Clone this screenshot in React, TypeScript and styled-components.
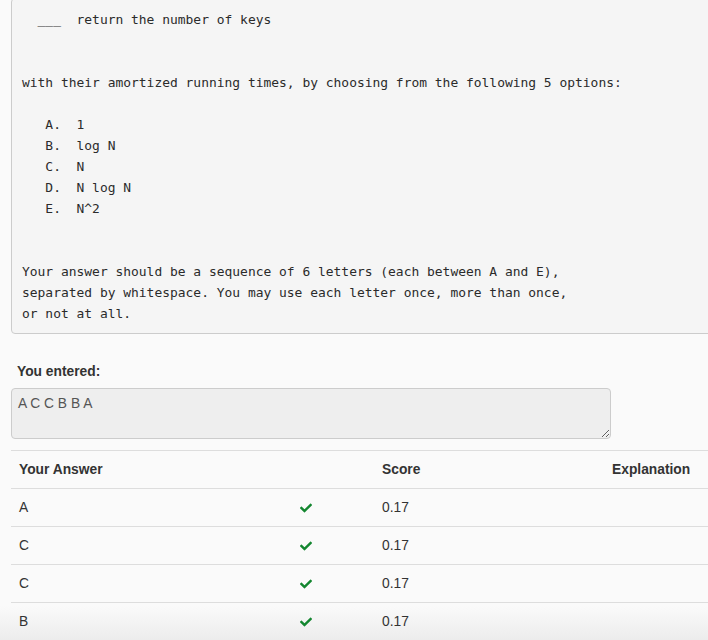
import React from 'react';
import styled, { createGlobalStyle } from 'styled-components';
import { FaCheck } from 'react-icons/fa';

const GlobalStyle = createGlobalStyle`
  html, body {
    margin: 0;
    padding: 0;
    overflow: hidden;
  }
  body {
    min-height: 640px;
    background: linear-gradient(to bottom, #fafafa 0, #fafafa 606px, #ececec 640px);
    font-family: 'Liberation Sans', Arial, sans-serif;
    color: #333;
  }
`;

const Page = styled.div`
  padding-left: 11px;
  min-height: 640px;
`;

const Question = styled.pre`
  margin: -2px -40px 0 0;
  padding: 9.5px 10px;
  background: #f5f5f5;
  border: 1px solid #ccc;
  border-radius: 4px;
  font-family: 'DejaVu Sans Mono', 'Liberation Mono', monospace;
  font-size: 12.95px;
  line-height: 21px;
  color: #2b2b2b;
  white-space: pre;
`;

const Label = styled.div`
  margin: 28px 0 6px 6px;
  font-size: 13.8px;
  font-weight: 700;
  line-height: 20px;
  color: #333;
`;

const Entered = styled.textarea`
  display: block;
  box-sizing: border-box;
  width: 600px;
  height: 51px;
  margin: 0;
  padding: 5px 6px;
  background: #eee;
  border: 1px solid #ccc;
  border-radius: 4px;
  font-family: 'Liberation Sans', Arial, sans-serif;
  font-size: 13.8px;
  line-height: 20px;
  color: #555;
  resize: vertical;
  outline: none;
`;

const Table = styled.table`
  margin-top: 11px;
  width: 740px;
  border-collapse: collapse;
  table-layout: fixed;
  font-size: 13.8px;
  color: #333;
`;

const Cell = styled.td<{ $w?: number }>`
  ${p => (p.$w ? `width: ${p.$w}px;` : '')}
  box-sizing: border-box;
  padding: 9px 8px 8px;
  line-height: 20px;
  border-top: 1px solid #ddd;
  text-align: left;
  vertical-align: top;
`;

const Head = styled(Cell).attrs({ as: 'th' })`
  font-weight: 700;
`;

const Check = styled(FaCheck)`
  display: block;
  margin-top: 4px;
  width: 12px;
  height: 12px;
  color: #13862f;
`;

const questionText = `  ___  return the number of keys


with their amortized running times, by choosing from the following 5 options:

   A.  1
   B.  log N
   C.  N
   D.  N log N
   E.  N^2


Your answer should be a sequence of 6 letters (each between A and E),
separated by whitespace. You may use each letter once, more than once,
or not at all.`;

const rows = ['A', 'C', 'C', 'B'];

export default function App() {
  return (
    <>
      <GlobalStyle />
      <Page>
        <Question>{questionText}</Question>
        <Label>You entered:</Label>
        <Entered readOnly value="A C C B B A" />
        <Table>
          <thead>
            <tr>
              <Head $w={281}>Your Answer</Head>
              <Head $w={82}></Head>
              <Head $w={230}>Score</Head>
              <Head>Explanation</Head>
            </tr>
          </thead>
          <tbody>
            {rows.map((r, i) => (
              <tr key={i}>
                <Cell>{r}</Cell>
                <Cell>
                  <Check />
                </Cell>
                <Cell>0.17</Cell>
                <Cell></Cell>
              </tr>
            ))}
          </tbody>
        </Table>
      </Page>
    </>
  );
}
